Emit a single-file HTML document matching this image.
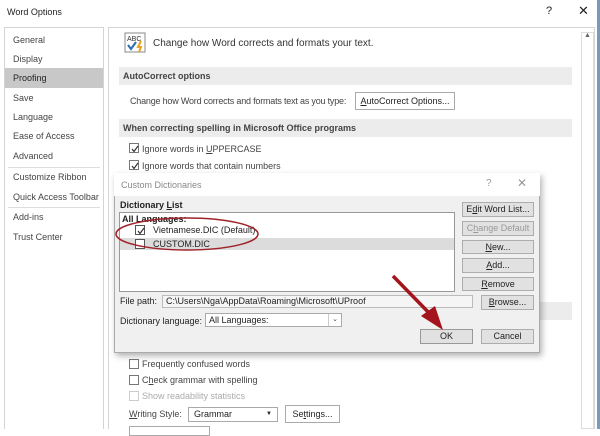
<!DOCTYPE html>
<html><head><meta charset="utf-8"><style>
*{margin:0;padding:0;box-sizing:border-box}
body{width:600px;height:429px;overflow:hidden;background:#fff;font-family:"Liberation Sans",sans-serif;font-size:9px;color:#444;position:relative}
.a{position:absolute;white-space:nowrap}
.side{left:4px;top:27px;width:100px;height:402px;border:1px solid #d4d4d4;border-bottom:none}
.si{position:absolute;left:0;width:98px;height:20px;line-height:20px;padding-left:8px;color:#444}
.hdr{background:#ececec;font-weight:bold;color:#444;height:18px;line-height:18px;padding-left:4px}
.cb{position:absolute;width:10px;height:10px;border:1px solid #777;background:#fff}
.btn{position:absolute;border:1px solid #adadad;background:#e1e1e1;text-align:center;color:#222}
.btn2{position:absolute;border:1px solid #aaa;background:#fff;text-align:center;color:#222}
.ck{position:absolute;left:1px;top:1px}
</style></head><body>
<div class="a" style="left:7px;top:7px;font-size:9px;color:#222">Word Options</div>
<div class="a" style="left:546px;top:5px;font-size:11px;color:#222">?</div>
<div class="a" style="left:578px;top:3px;font-size:13px;color:#222">✕</div>
<div class="a" style="left:597px;top:0;width:3px;height:429px;background:#7a9bb8"></div>

<div class="a side">
<div class="si" style="top:2px">General</div>
<div class="si" style="top:21px">Display</div>
<div class="si" style="top:40px;background:#c8c8c8;color:#222">Proofing</div>
<div class="si" style="top:60px">Save</div>
<div class="si" style="top:79px">Language</div>
<div class="si" style="top:98px">Ease of Access</div>
<div class="si" style="top:118px">Advanced</div>
<div class="a" style="left:3px;top:139px;width:92px;height:1px;background:#ddd"></div>
<div class="si" style="top:139px">Customize Ribbon</div>
<div class="si" style="top:159px">Quick Access Toolbar</div>
<div class="a" style="left:3px;top:179px;width:92px;height:1px;background:#ddd"></div>
<div class="si" style="top:179px">Add-ins</div>
<div class="si" style="top:199px">Trust Center</div>
</div>

<div class="a" style="left:108px;top:27px;width:487px;height:402px;border:1px solid #d4d4d4;border-bottom:none"></div>
<div class="a" style="left:581px;top:32px;width:13px;height:397px;border:1px solid #ddd;background:#fff"></div>
<div class="a" style="left:584px;top:32px;font-size:7px;color:#666">▲</div>

<svg class="a" style="left:124px;top:32px" width="24" height="22"><rect x="1" y="1" width="20" height="19" fill="#fff" stroke="#888"/><text x="3" y="9" font-size="7" font-family="Liberation Sans" fill="#333">ABC</text><path d="M4 13 L7 17 L12 10" stroke="#2b6cb0" stroke-width="2" fill="none"/><path d="M17 9 L14 15 L17 15 L15 20" stroke="#e8a520" stroke-width="2" fill="none"/></svg>
<div class="a" style="left:153px;top:38px;font-size:10px;color:#333">Change how Word corrects and formats your text.</div>
<div class="a hdr" style="left:119px;top:67px;width:453px">AutoCorrect options</div>
<div class="a" style="left:130px;top:96px;color:#444;letter-spacing:-0.2px">Change how Word corrects and formats text as you type:</div>
<div class="btn2" style="left:355px;top:92px;width:100px;height:18px;line-height:16px"><u>A</u>utoCorrect Options...</div>
<div class="a hdr" style="left:119px;top:119px;width:453px">When correcting spelling in Microsoft Office programs</div>
<div class="cb" style="left:129px;top:143px"><svg class="ck" width="8" height="8"><path d="M1 4 L3 6.5 L7 1" stroke="#333" stroke-width="1.2" fill="none"/></svg></div>
<div class="a" style="left:142px;top:144px">Ignore words in <u>U</u>PPERCASE</div>
<div class="cb" style="left:129px;top:160px"><svg class="ck" width="8" height="8"><path d="M1 4 L3 6.5 L7 1" stroke="#333" stroke-width="1.2" fill="none"/></svg></div>
<div class="a" style="left:142px;top:161px">Ignore words that contain numbers</div>
<div class="a hdr" style="left:119px;top:302px;width:453px"></div>

<div class="cb" style="left:129px;top:359px"></div><div class="a" style="left:142px;top:359px">Frequently confused words</div>
<div class="cb" style="left:129px;top:375px"></div><div class="a" style="left:142px;top:375px">C<u>h</u>eck grammar with spelling</div>
<div class="cb" style="left:129px;top:391px;border-color:#ccc"></div><div class="a" style="left:142px;top:391px;color:#aaa">Show readability statistics</div>
<div class="a" style="left:129px;top:409px"><u>W</u>riting Style:</div>
<div class="btn2" style="left:188px;top:407px;width:90px;height:15px;text-align:left;padding-left:5px;line-height:13px">Grammar<span style="position:absolute;right:5px;font-size:6px">▼</span></div>
<div class="btn2" style="left:285px;top:405px;width:55px;height:18px;line-height:16px">Se<u>t</u>tings...</div>
<div class="a" style="left:129px;top:426px;width:81px;height:10px;border:1px solid #aaa"></div>

<!-- dialog -->
<div class="a" style="left:114px;top:173px;width:426px;height:180px;background:#f0f0f0;border:1px solid #aaa;box-shadow:2px 3px 6px rgba(0,0,0,.3)"></div>
<div class="a" style="left:114px;top:173px;width:426px;height:23px;background:#fff"></div>
<div class="a" style="left:121px;top:180px;color:#888">Custom Dictionaries</div>
<div class="a" style="left:486px;top:178px;color:#999;font-size:10px">?</div>
<div class="a" style="left:517px;top:176px;color:#999;font-size:12px">✕</div>
<div class="a" style="left:120px;top:200px;font-weight:bold;color:#222">Dictionary <u>L</u>ist</div>
<div class="a" style="left:119px;top:212px;width:336px;height:80px;background:#fff;border:1px solid #999"></div>
<div class="a" style="left:122px;top:214px;font-weight:bold;color:#222">All Languages:</div>
<div class="a" style="left:120px;top:238px;width:334px;height:12px;background:#dcdcdc"></div>
<div class="cb" style="left:135px;top:225px;border-color:#555"><svg class="ck" width="8" height="8"><path d="M1 4 L3 6.5 L7 1" stroke="#333" stroke-width="1.2" fill="none"/></svg></div>
<div class="a" style="left:153px;top:225px;color:#222">Vietnamese.DIC (Default)</div>
<div class="cb" style="left:135px;top:239px;border-color:#555"></div>
<div class="a" style="left:153px;top:239px;color:#222">CUSTOM.DIC</div>
<svg class="a" style="left:110px;top:212px" width="160" height="46"><ellipse cx="77" cy="22" rx="71" ry="16" fill="none" stroke="#a0222a" stroke-width="1.5"/></svg>

<div class="btn" style="left:462px;top:202px;width:72px;height:15px;line-height:13px">E<u>d</u>it Word List...</div>
<div class="btn" style="left:462px;top:221px;width:72px;height:15px;line-height:13px;color:#999">C<u>h</u>ange Default</div>
<div class="btn" style="left:462px;top:240px;width:72px;height:14px;line-height:12px"><u>N</u>ew...</div>
<div class="btn" style="left:462px;top:258px;width:72px;height:15px;line-height:13px"><u>A</u>dd...</div>
<div class="btn" style="left:462px;top:277px;width:72px;height:14px;line-height:12px"><u>R</u>emove</div>
<div class="a" style="left:120px;top:296px;color:#222">File path:</div>
<div class="a" style="left:162px;top:295px;width:311px;height:13px;background:#f5f5f5;border:1px solid #bbb;padding-left:3px;line-height:11px;color:#222">C:\Users\Nga\AppData\Roaming\Microsoft\UProof</div>
<div class="btn" style="left:481px;top:295px;width:53px;height:15px;line-height:13px"><u>B</u>rowse...</div>
<div class="a" style="left:120px;top:316px;color:#222">Dictionary language:</div>
<div class="a" style="left:205px;top:313px;width:137px;height:14px;background:#fff;border:1px solid #aaa;padding-left:3px;line-height:12px;color:#222">All Languages:</div>
<div class="a" style="left:328px;top:314px;width:13px;height:12px;border-left:1px solid #ccc;font-size:7px;text-align:center;line-height:12px">⌄</div>
<div class="btn" style="left:420px;top:329px;width:53px;height:15px;line-height:13px;border-color:#999">OK</div>
<div class="btn" style="left:481px;top:329px;width:53px;height:15px;line-height:13px">Cancel</div>

<svg class="a" style="left:385px;top:270px" width="70" height="65"><line x1="8" y1="6" x2="48" y2="47" stroke="#a3141c" stroke-width="3.5"/><polygon points="36,46 58,60 50,36" fill="#a3141c"/></svg>
</body></html>
